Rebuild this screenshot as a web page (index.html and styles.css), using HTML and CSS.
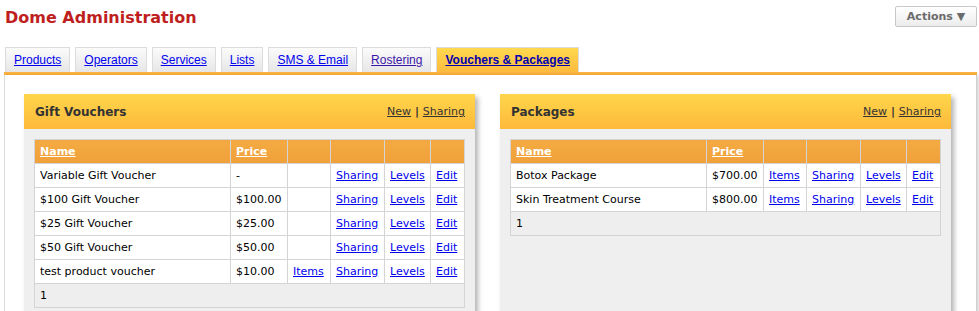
FILE: index.html
```html
<!DOCTYPE html>
<html lang="en">
<head>
    <meta charset="UTF-8">
    <title>Dome Administration</title>
    <link rel="stylesheet" href="styles.css">
</head>
<body>
    <div class="page">
        <header class="masthead">
            <h1>Dome Administration</h1>
            <button class="actions">Actions &#9660;</button>
        </header>

        <!-- Tabs -->
        <ul class="tabs">
            <li><a href="#">Products</a></li>
            <li><a href="#">Operators</a></li>
            <li><a href="#">Services</a></li>
            <li><a href="#">Lists</a></li>
            <li><a href="#">SMS &amp; Email</a></li>
            <li><a href="#" class="visited">Rostering</a></li>
            <li class="active"><a href="#">Vouchers &amp; Packages</a></li>
        </ul>

        <div class="content">
            <section class="panel">
                <div class="panel-head">
                    <h2>Gift Vouchers</h2>
                    <div class="panel-links"><a href="#">New</a> | <a href="#">Sharing</a></div>
                </div>
                <div class="panel-body">
                    <table class="grid">
                        <thead>
                            <tr>
                                <th><a href="#">Name</a></th>
                                <th class="col-price"><a href="#">Price</a></th>
                                <th class="col-items"></th>
                                <th class="col-sharing"></th>
                                <th class="col-levels"></th>
                                <th class="col-edit"></th>
                            </tr>
                        </thead>
                        <tbody>
                            <tr>
                                <td>Variable Gift Voucher</td>
                                <td>-</td>
                                <td></td>
                                <td><a href="#">Sharing</a></td>
                                <td><a href="#">Levels</a></td>
                                <td><a href="#">Edit</a></td>
                            </tr>
                            <tr>
                                <td>$100 Gift Voucher</td>
                                <td>$100.00</td>
                                <td></td>
                                <td><a href="#">Sharing</a></td>
                                <td><a href="#">Levels</a></td>
                                <td><a href="#">Edit</a></td>
                            </tr>
                            <tr>
                                <td>$25 Gift Voucher</td>
                                <td>$25.00</td>
                                <td></td>
                                <td><a href="#">Sharing</a></td>
                                <td><a href="#">Levels</a></td>
                                <td><a href="#">Edit</a></td>
                            </tr>
                            <tr>
                                <td>$50 Gift Voucher</td>
                                <td>$50.00</td>
                                <td></td>
                                <td><a href="#">Sharing</a></td>
                                <td><a href="#">Levels</a></td>
                                <td><a href="#">Edit</a></td>
                            </tr>
                            <tr>
                                <td>test product voucher</td>
                                <td>$10.00</td>
                                <td><a href="#">Items</a></td>
                                <td><a href="#">Sharing</a></td>
                                <td><a href="#">Levels</a></td>
                                <td><a href="#">Edit</a></td>
                            </tr>
                        </tbody>
                        <tfoot>
                            <tr>
                                <td colspan="6">1</td>
                            </tr>
                        </tfoot>
                    </table>
                </div>
            </section>

            <section class="panel">
                <div class="panel-head">
                    <h2>Packages</h2>
                    <div class="panel-links"><a href="#">New</a> | <a href="#">Sharing</a></div>
                </div>
                <div class="panel-body">
                    <table class="grid">
                        <thead>
                            <tr>
                                <th><a href="#">Name</a></th>
                                <th class="col-price"><a href="#">Price</a></th>
                                <th class="col-items"></th>
                                <th class="col-sharing"></th>
                                <th class="col-levels"></th>
                                <th class="col-edit"></th>
                            </tr>
                        </thead>
                        <tbody>
                            <tr>
                                <td>Botox Package</td>
                                <td>$700.00</td>
                                <td><a href="#">Items</a></td>
                                <td><a href="#">Sharing</a></td>
                                <td><a href="#">Levels</a></td>
                                <td><a href="#">Edit</a></td>
                            </tr>
                            <tr>
                                <td>Skin Treatment Course</td>
                                <td>$800.00</td>
                                <td><a href="#">Items</a></td>
                                <td><a href="#">Sharing</a></td>
                                <td><a href="#">Levels</a></td>
                                <td><a href="#">Edit</a></td>
                            </tr>
                        </tbody>
                        <tfoot>
                            <tr>
                                <td colspan="6">1</td>
                            </tr>
                        </tfoot>
                    </table>
                </div>
            </section>
        </div>
    </div>
</body>
</html>
```

FILE: styles.css
```css
:root {
    --title-red: #bf1e1e;
    --orange-line: #fbb03f;
    --head-top: #ffd64b;
    --head-bottom: #fdb93a;
    --grid-border: #d4d4d4;
    --panel-bg: #efefef;
    --link: #0000ee;
}

body {
    margin: 0;
    font-family: "DejaVu Sans", Verdana, sans-serif;
    font-size: 11px;
    color: #000;
    background: #fff;
}

a {
    color: var(--link);
}

.page {
    padding: 0 2px 0 4px;
}

.masthead {
    display: flex;
    justify-content: space-between;
    align-items: flex-start;
    height: 47px;
}

.masthead h1 {
    margin: 0;
    padding: 6px 0 0 1px;
    font-size: 16px;
    line-height: 23px;
    color: var(--title-red);
}

.actions {
    margin-top: 6px;
    width: 82px;
    height: 21px;
    padding: 0;
    border: 1px solid #c8c8c8;
    border-radius: 2px;
    background: linear-gradient(#ffffff, #ececec);
    font-family: "DejaVu Sans", Verdana, sans-serif;
    font-size: 11px;
    font-weight: bold;
    color: #6b6b6b;
}

/* Tabs */
.tabs {
    display: flex;
    gap: 5px;
    margin: 0;
    padding: 0;
    list-style: none;
    border-bottom: 3px solid var(--orange-line);
}

.tabs li {
    height: 24px;
    padding: 0 8px;
    border: 1px solid #dcdcdc;
    border-bottom: none;
    background: linear-gradient(#fbfbfb, #e6e6e6);
    font-family: "Liberation Sans", Arial, sans-serif;
    font-size: 12px;
    line-height: 24px;
}

.tabs li:first-child {
    margin-left: 1px;
}

.tabs a.visited {
    color: #3c16aa;
}

.tabs li.active {
    background: linear-gradient(#ffd84f, #fdbb3e);
}

.tabs li.active a {
    color: #0000b0;
    font-weight: bold;
}

/* Content */
.content {
    display: grid;
    grid-template-columns: 451px 451px;
    gap: 25px;
    padding: 19px 20px 20px 19px;
    border-left: 1px solid #dcdcdc;
    border-right: 1px solid #cfcfcf;
    box-shadow: 2px 0 2px rgba(0, 0, 0, 0.15);
    min-height: 300px;
}

.panel {
    background: var(--panel-bg);
    box-shadow: 3px 3px 5px rgba(0, 0, 0, 0.3);
}

.panel-head {
    display: flex;
    justify-content: space-between;
    align-items: center;
    height: 35px;
    padding: 0 10px 0 11px;
    background: linear-gradient(var(--head-top), var(--head-bottom));
}

.panel-head h2 {
    margin: 0;
    font-size: 12px;
    color: #333;
}

.panel-links {
    color: #333;
    font-weight: bold;
}

.panel-links a {
    color: #333;
    font-weight: normal;
}

.panel-body {
    padding: 10px 10px 20px;
}

.grid {
    width: 100%;
    table-layout: fixed;
    border-collapse: collapse;
    background: #fff;
}

.grid th,
.grid td {
    height: 23px;
    padding: 0 5px;
    border: 1px solid var(--grid-border);
    text-align: left;
    white-space: nowrap;
}

.grid th {
    background: linear-gradient(#f4aa42, #f0a03a);
}

.grid th a {
    color: #fff;
    font-weight: bold;
}

.grid .col-price { width: 46px; }
.grid .col-items { width: 32px; }
.grid .col-sharing { width: 43px; }
.grid .col-levels { width: 35px; }
.grid .col-edit { width: 23px; }

.grid tfoot td {
    background: #eee;
}
```
